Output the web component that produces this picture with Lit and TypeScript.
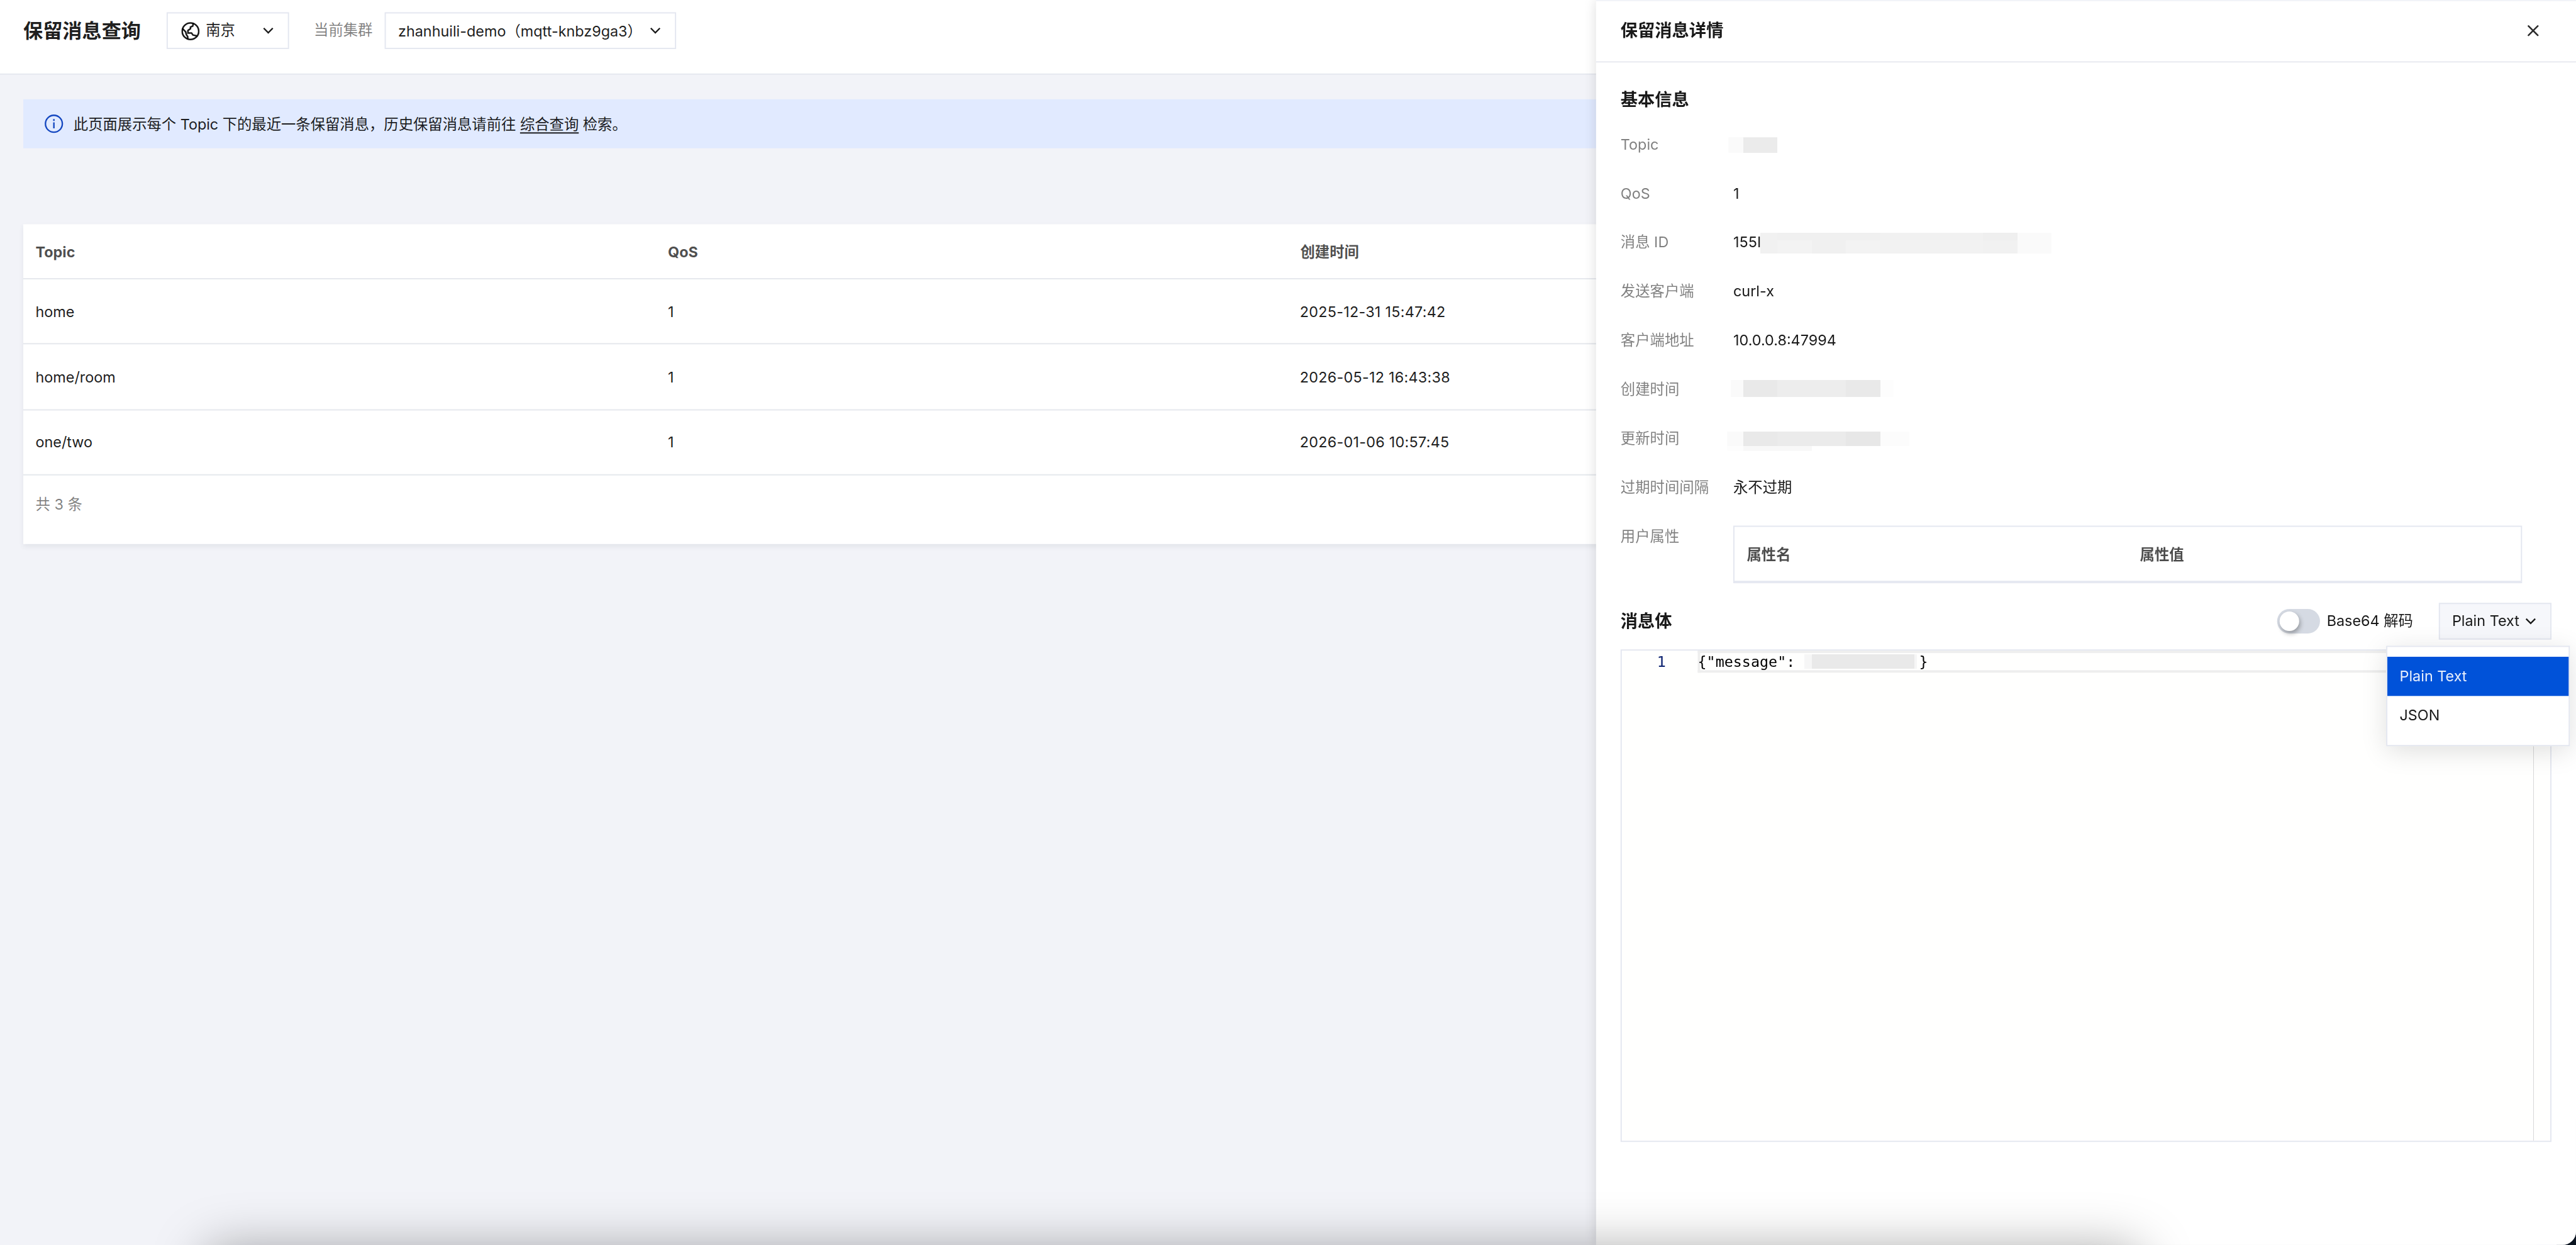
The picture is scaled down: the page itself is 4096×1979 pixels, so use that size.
import { LitElement, html, css, svg } from "lit";
import { customElement } from "lit/decorators.js";

interface Retained {
  topic: string;
  qos: number;
  created: string;
}

/** One strip of a redaction mosaic: its height and its [width, colour] tiles. */
type Strip = [number, [number, string][]];

const rows: Retained[] = [
  { topic: "home", qos: 1, created: "2025-12-31 15:47:42" },
  { topic: "home/room", qos: 1, created: "2026-05-12 16:43:38" },
  { topic: "one/two", qos: 1, created: "2026-01-06 10:57:45" },
];

const chevron = html`<svg class="chev" viewBox="0 0 12 12">
  ${svg`<path d="M2.3 4 6 7.7 9.7 4" fill="none" stroke="currentColor" stroke-width="1.2"/>`}
</svg>`;

@customElement("app-root")
export class AppRoot extends LitElement {
  static styles = css`
    :host {
      display: block;
      width: 4096px;
      height: 1979px;
      overflow: hidden;
      background: #0b1420;
    }
    * {
      box-sizing: border-box;
    }
    svg {
      display: block;
      flex: none;
    }
    .window {
      position: relative;
      width: 2103px;
      height: 1016px;
      transform: scale(1.94769);
      transform-origin: 0 0;
      overflow: hidden;
      border-bottom-right-radius: 11px;
      background: #f2f3f8;
      color: rgba(0, 0, 0, 0.9);
      font: 12px/20px Inter, "Noto Sans CJK SC", sans-serif;
    }
    .top {
      display: flex;
      align-items: flex-start;
      height: 61px;
      padding: 10px 19px 0;
      border-bottom: 1px solid #e4e7ee;
      background: #fff;
    }
    .title {
      margin: 0 21px 0 0;
      font-size: 16px;
      line-height: 30px;
      font-weight: 700;
    }
    .select {
      display: flex;
      align-items: center;
      height: 30px;
      padding: 0 10px;
      border: 1px solid #e4e7f0;
      background: #fff;
    }
    .region {
      width: 100px;
      margin-right: 20.2px;
      padding-left: 11px;
    }
    .region .name {
      flex: 1;
      margin-left: 5px;
    }
    .caption {
      width: 57.8px;
      line-height: 30px;
      color: rgba(0, 0, 0, 0.5);
    }
    .cluster {
      width: 238px;
    }
    .cluster .name {
      flex: 1;
      padding-top: 2.6px;
      white-space: nowrap;
    }
    .chev {
      width: 12px;
      height: 12px;
    }
    .alert {
      display: flex;
      align-items: center;
      gap: 8px;
      height: 40px;
      margin: 20px 19px 62px;
      padding-left: 17px;
      background: #e1eaff;
    }
    .alert .msg {
      padding-top: 1px;
      letter-spacing: -0.02px;
    }
    .link {
      text-decoration: underline;
      text-underline-offset: 2px;
      text-decoration-thickness: 1px;
    }
    .card {
      height: 261px;
      margin: 0 19px;
      background: #fff;
      box-shadow: 0 2px 4px rgba(54, 58, 80, 0.08);
    }
    .grid {
      display: grid;
      grid-template-columns: repeat(4, 1fr);
      grid-template-rows: 45px repeat(3, 53.33px);
    }
    .cell {
      display: flex;
      align-items: center;
      padding: 1.2px 10px 0;
      border-bottom: 1px solid #e5e8ed;
    }
    .date {
      padding-left: 9.6px;
      letter-spacing: 0.13px;
    }
    .th {
      font-weight: 700;
      color: rgba(0, 0, 0, 0.7);
    }
    .total {
      padding: 14.4px 10px;
      color: rgba(0, 0, 0, 0.5);
    }
    .drawer {
      position: absolute;
      top: 0;
      right: 0;
      width: 800px;
      height: 1016px;
      border-top: 1px solid #f2f3f8;
      background: #fff;
      box-shadow: 0 0 10px rgba(0, 0, 0, 0.14);
    }
    .dhead {
      display: flex;
      align-items: center;
      justify-content: space-between;
      height: 50px;
      padding: 0 29px 1px 20px;
      border-bottom: 1px solid #e8eaf0;
    }
    .h {
      margin: 0;
      font-size: 14px;
      line-height: 22px;
      font-weight: 700;
    }
    .dbody {
      padding: 19px 20px 0;
    }
    .info {
      display: grid;
      grid-template-columns: 92px 644px;
      grid-auto-rows: 40px;
      margin-top: 6px;
    }
    .info .k,
    .info .v {
      padding-top: 10.3px;
      white-space: nowrap;
    }
    .info .k {
      color: rgba(0, 0, 0, 0.5);
    }
    .info .v {
      display: flex;
    }
    .lead {
      width: 21.9px;
    }
    .attrs {
      display: grid;
      grid-template-columns: 1fr 1fr;
      height: 47px;
      margin-top: 11px;
      border: 1px solid #e4e7f0;
    }
    .attrs .cell {
      border-color: #e4e7f0;
    }
    .bodybar {
      display: flex;
      align-items: center;
      height: 30px;
      margin-top: 34px;
    }
    .bodybar .h {
      flex: 1;
    }
    .switch {
      width: 35px;
      height: 20px;
      margin-right: 5.4px;
      padding: 2px;
      border-radius: 10px;
      background: #d5dae3;
    }
    .knob {
      width: 16px;
      height: 16px;
      border-radius: 50%;
      background: #fff;
      box-shadow: 1px 2px 4px rgba(0, 0, 0, 0.3);
    }
    .decode {
      width: 91px;
      padding-top: 0.8px;
    }
    .format {
      width: 92.5px;
      height: 30px;
      display: flex;
      align-items: center;
      justify-content: space-between;
      padding: 0 10px 0 10.3px;
      border: 1px solid #e4e7f0;
      background: #f6f7fb;
    }
    .format .name {
      padding-top: 0.8px;
    }
    .editor {
      display: flex;
      height: 402px;
      margin-top: 8px;
      border: 1px solid #e4e7f0;
      background: #fffffe;
      color: #000;
      font: 12px/18px "DejaVu Sans Mono", monospace;
    }
    .gutter {
      width: 62px;
      padding-right: 26px;
      text-align: right;
      color: #0b216f;
    }
    .lines {
      flex: 1;
    }
    .line {
      display: flex;
      height: 18px;
      line-height: 14px;
      border: 2px solid #eee;
      border-right: 0;
      white-space: pre;
    }
    .code {
      margin-left: -2px;
    }
    .brace {
      margin-left: 2px;
    }
    .ruler {
      width: 14.5px;
      box-shadow: inset 0.5px 0 0 #cfcfcf;
    }
    .menu {
      position: absolute;
      top: 526px;
      right: 5px;
      width: 150px;
      height: 82px;
      padding: 8px 0;
      border: 1px solid #e4e7f0;
      background: #fff;
      box-shadow: 0 4px 20px rgba(0, 0, 0, 0.13);
    }
    .item {
      padding: 6.3px 10px 5.7px;
    }
    .item.on {
      background: #0052d9;
      color: rgba(255, 255, 255, 0.9);
    }
    .shade {
      position: absolute;
      left: 171px;
      top: 1023px;
      width: 1573px;
      height: 60px;
      border-radius: 10px;
      box-shadow: 0 0 42px 4px rgba(0, 0, 0, 0.34);
    }
  `;

  private mosaic(strips: Strip[], dx: number, dy: number) {
    const width = Math.max(...strips.map(([, tiles]) => tiles.reduce((sum, [w]) => sum + w, 0)));
    const height = strips.reduce((sum, [h]) => sum + h, 0);
    let y = 0;
    return html`<svg width=${width} height=${height} style="margin: ${dy}px 0 0 ${dx}px">
      ${strips.map(([h, tiles]) => {
        let x = 0;
        const top = y;
        y += h;
        return tiles.map(([w, fill]) => {
          const left = x;
          x += w;
          return svg`<rect x=${left} y=${top} width=${w} height=${h} fill=${fill} shape-rendering="crispEdges"/>`;
        });
      })}
    </svg>`;
  }

  private get details() {
    return [
      ["Topic", this.mosaic([[13, [[12, "#fafafa"], [28, "#ebebeb"]]]], -4, 3.7)],
      ["QoS", "1"],
      [
        "消息 ID",
        html`<span class="lead">155I</span>${this.mosaic(
          [
            [6, [[14, "#f1f1f1"], [84, "#f0f0f0"], [84, "#f1f1f1"], [28, "#efefef"], [28, "#fafafa"]]],
            [
              11,
              [
                [14, "#f1f1f1"],
                [28, "#f3f3f3"],
                [28, "#f0f0f0"],
                [28, "#f3f3f3"],
                [84, "#f2f2f2"],
                [28, "#f1f1f1"],
                [28, "#fafafa"],
              ],
            ],
          ],
          0,
          1.7,
        )}`,
      ],
      ["发送客户端", "curl-x"],
      ["客户端地址", "10.0.0.8:47994"],
      [
        "创建时间",
        this.mosaic(
          [[14, [[10, "#fafafa"], [28, "#e9e9e9"], [56, "#ededed"], [28, "#e9e9e9"], [11, "#fdfdfd"]]]],
          -2,
          1.7,
        ),
      ],
      [
        "更新时间",
        this.mosaic(
          [
            [12, [[13, "#fafafa"], [28, "#e9e9e9"], [56, "#ebebeb"], [28, "#e7e7e7"], [24, "#fcfcfc"]]],
            [4, [[13, "#fdfdfd"], [56, "#f8f8f8"]]],
          ],
          -5,
          3.7,
        ),
      ],
      ["过期时间间隔", "永不过期"],
    ];
  }

  render() {
    return html`<div class="window">
      <header class="top">
        <h1 class="title">保留消息查询</h1>
        <div class="select region">
          <svg width="15" height="15" viewBox="0 0 16 16">
            ${svg`<g fill="none" stroke="currentColor" stroke-width="1.4">
              <circle cx="8" cy="8" r="7.2"/>
              <path d="M10.4 1.1 10 3.5 8 4.4 8 5.8 5.8 7.3 5.8 9.5 8.9 9.5 10.2 11.3 13.5 12M.9 5.5 3.8 8.5 4.4 10.9 5.6 12.8 5.6 14.9"/>
            </g>`}
          </svg>
          <span class="name">南京</span>${chevron}
        </div>
        <span class="caption">当前集群</span>
        <div class="select cluster"><span class="name">zhanhuili-demo（mqtt-knbz9ga3）</span>${chevron}</div>
      </header>

      <div class="alert">
        <svg width="16" height="16" viewBox="0 0 16 16">
          ${svg`<circle cx="8" cy="8" r="6.9" fill="none" stroke="#1447c0" stroke-width="1.2"/>
            <path d="M8 4.2v1.5M8 6.9v4.9" stroke="#1447c0" stroke-width="1.2"/>`}
        </svg>
        <span class="msg"
          >此页面展示每个 Topic 下的最近一条保留消息，历史保留消息请前往 <span class="link">综合查询</span> 检索。</span
        >
      </div>

      <section class="card">
        <div class="grid">
          ${["Topic", "QoS", "创建时间", ""].map((t) => html`<div class="cell th">${t}</div>`)}
          ${rows.map(
            (r) => html`<div class="cell">${r.topic}</div>
              <div class="cell">${r.qos}</div>
              <div class="cell date">${r.created}</div>
              <div class="cell"></div>`,
          )}
        </div>
        <div class="total">共 3 条</div>
      </section>

      <aside class="drawer">
        <div class="dhead">
          <h2 class="h">保留消息详情</h2>
          <svg width="12" height="12" viewBox="0 0 12 12">
            ${svg`<path d="M2.2 2.2 9.8 9.8M9.8 2.2 2.2 9.8" stroke="#2b2b2b" stroke-width="1.3" stroke-linecap="round"/>`}
          </svg>
        </div>
        <div class="dbody">
          <h3 class="h">基本信息</h3>
          <div class="info">
            ${this.details.map(([k, v]) => html`<div class="k">${k}</div><div class="v">${v}</div>`)}
            <div class="k">用户属性</div>
            <div class="attrs">
              <div class="cell th">属性名</div>
              <div class="cell th">属性值</div>
            </div>
          </div>
          <div class="bodybar">
            <h3 class="h">消息体</h3>
            <div class="switch"><div class="knob"></div></div>
            <span class="decode">Base64 解码</span>
            <div class="format"><span class="name">Plain Text</span>${chevron}</div>
          </div>
          <div class="editor">
            <div class="gutter">1</div>
            <div class="lines">
              <div class="line"><span class="code">{"message": </span>${this.mosaic(
                [[12, [[6, "#f6f6f6"], [84, "#e9e9e9"], [2, "#f6f6f6"]]]],
                0,
                1,
              )}<span class="brace">}</span></div>
            </div>
            <div class="ruler"></div>
          </div>
        </div>
        <div class="menu">
          <div class="item on">Plain Text</div>
          <div class="item">JSON</div>
        </div>
      </aside>
      <div class="shade"></div>
    </div>`;
  }
}
